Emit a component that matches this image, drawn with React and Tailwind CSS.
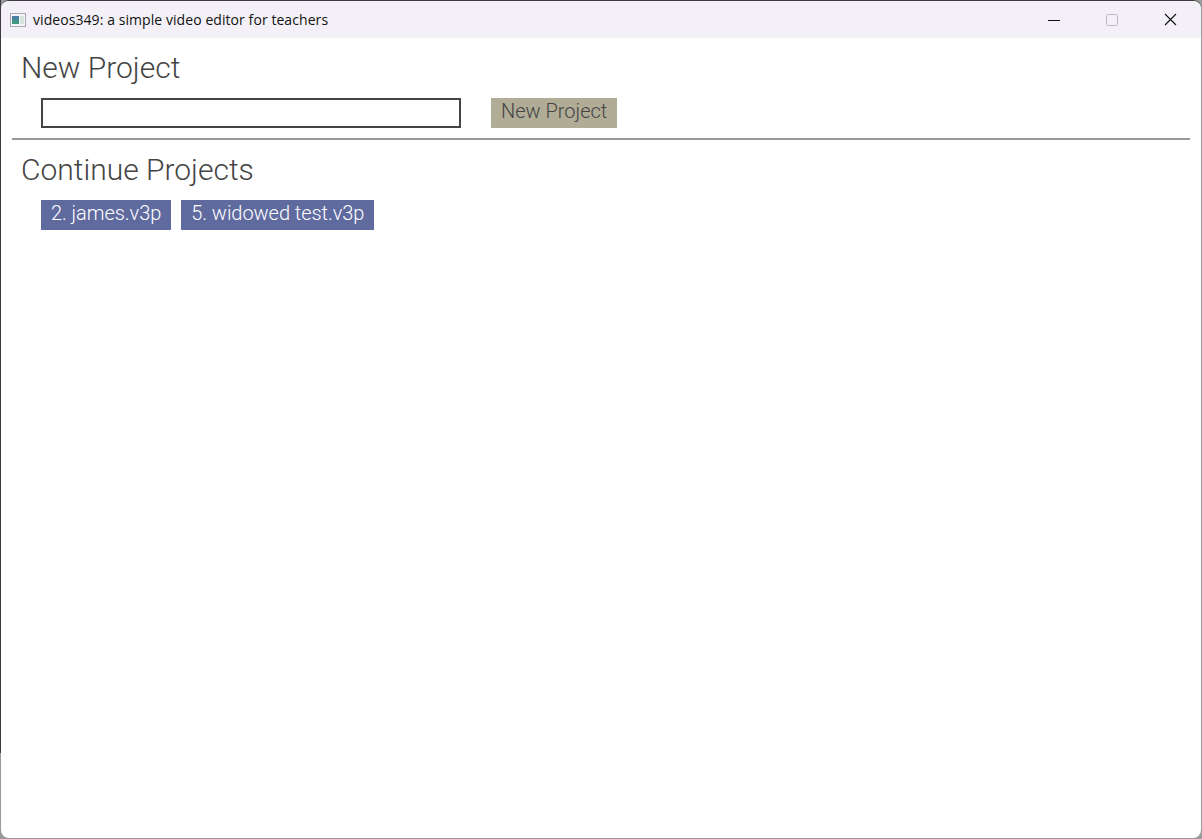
import React from "react";

function TitleBar() {
  return (
    <div className="h-[37px] shrink-0 flex items-center justify-between bg-[#f3f1f7]">
      <div className="flex items-center pl-[9px] gap-[7px]">
        <svg width="16" height="16" viewBox="0 0 16 16">
          <rect x="0.5" y="1.5" width="15" height="13" fill="#f4f4f6" stroke="#a8a8ae" />
          <rect x="2" y="4" width="7" height="8" fill="#3f9a80" />
          <rect x="2" y="4" width="7" height="4" fill="#4a7fa0" />
          <rect x="10" y="4" width="4" height="8" fill="#d5e4dc" />
        </svg>
        <span className="font-['Open_Sans',sans-serif] font-normal text-[14px] leading-none text-[#111] tracking-[0.07px]">
          videos349: a simple video editor for teachers
        </span>
      </div>
      <div className="flex items-center h-full">
        <button className="w-[58px] h-full flex items-center justify-center">
          <svg width="12" height="12" viewBox="0 0 12 12">
            <path d="M0 6.5H12" stroke="#111" strokeWidth="1" />
          </svg>
        </button>
        <button className="w-[58px] h-full flex items-center justify-center">
          <svg width="12" height="12" viewBox="0 0 12 12">
            <rect x="0.5" y="0.5" width="11" height="11" rx="1" fill="none" stroke="#bdbbc1" />
          </svg>
        </button>
        <button className="w-[60px] h-full flex items-center justify-center pr-[1px]">
          <svg width="13" height="13" viewBox="0 0 13 13">
            <path d="M1 1L12 12M12 1L1 12" stroke="#111" strokeWidth="1.1" />
          </svg>
        </button>
      </div>
    </div>
  );
}

export default function App() {
  return (
    <div className="w-[1202px] h-[839px] bg-[#9a9a9a] bg-[linear-gradient(#3c3c3c,#3c3c3c)] bg-[length:1px_753px] bg-no-repeat overflow-hidden font-['Roboto',sans-serif] font-light text-[#444]">
      <div className="h-[838px] w-[1200px] ml-px border-t border-t-[#3c3c3c] bg-white rounded-lg overflow-hidden flex flex-col">
        <TitleBar />
        <main className="flex-1 px-[11px]">
          <section className="px-[9px] pt-[10px] pb-[10px]">
            <h1 className="text-[30px] leading-[40px]">New Project</h1>
            <div className="flex items-center gap-[30px] pl-[20px] mt-[10px]">
              <input className="w-[420px] h-[30px] border-2 border-[#444] bg-white outline-none" />
              <button className="h-[30px] px-[10px] pb-[4px] bg-[#b0ac96] text-[20px] leading-none">New Project</button>
            </div>
          </section>
          <hr className="border-0 h-[2px] w-[1178px] bg-[#999]" />
          <section className="px-[9px] pt-[10px]">
            <h1 className="text-[30px] leading-[40px]">Continue Projects</h1>
            <div className="flex items-center gap-[10px] pl-[20px] mt-[10px]">
              <button className="h-[30px] px-[10px] pb-[4px] bg-[#5f6a9f] text-white text-[20px] leading-none tracking-[-0.05px]">2. james.v3p</button>
              <button className="h-[30px] px-[10px] pb-[4px] bg-[#5f6a9f] text-white text-[20px] leading-none tracking-[-0.05px]">5. widowed test.v3p</button>
            </div>
          </section>
        </main>
      </div>
    </div>
  );
}
